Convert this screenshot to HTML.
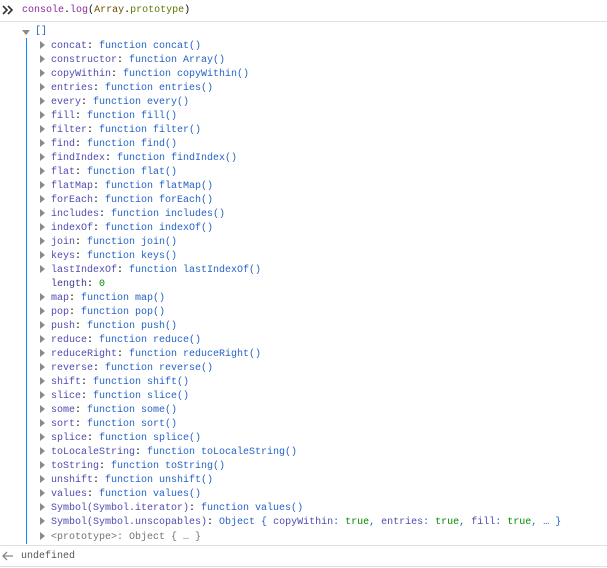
<!DOCTYPE html><html><head><style>
body{margin:0;width:607px;height:568px;background:#fff;font-family:"Liberation Mono",monospace;font-size:10px;color:#0c0c0d;overflow:hidden;position:relative}
.l{position:absolute;white-space:pre;line-height:14px}
.k{color:#4f4bb0}.f{color:#2563c4}.g{color:#058b00}.d{color:#3c3c8c}.p{color:#737373}
.t{position:absolute;width:0;height:0;border-top:4px solid transparent;border-bottom:4px solid transparent;border-left:5px solid #8a8a8a}
</style></head><body>
<svg style="position:absolute;left:2px;top:5px" width="12" height="10"><path d="M1 1l4 4-4 4M6 1l4 4-4 4" fill="none" stroke="#333" stroke-width="1.6"/></svg>
<div class="l" style="left:22px;top:4px"><span style="color:#8b2a9e">console</span>.<span style="color:#8b2a9e">log</span>(<span style="color:#6b4e00">Array</span>.<span style="color:#5a7a00">prototype</span>)</div>
<div style="position:absolute;left:0;right:0;top:21px;border-top:1px solid #e0e0e2"></div>
<div style="position:absolute;left:22px;top:30px;width:0;height:0;border-left:4px solid transparent;border-right:4px solid transparent;border-top:5px solid #8a8a8a"></div>
<div class="l f" style="left:35px;top:25px">[]</div>
<div style="position:absolute;left:26px;top:38px;width:1px;height:506px;background:#0a84ff"></div>
<div id="rows"></div>
<div style="position:absolute;left:0;right:0;top:545px;border-top:1px solid #e0e0e2"></div>
<svg style="position:absolute;left:2px;top:551px" width="12" height="10"><path d="M11 5H2M5 1L1 5l4 4" fill="none" stroke="#888" stroke-width="1.3"/></svg>
<div class="l" style="left:21px;top:550px;color:#555">undefined</div>
<div style="position:absolute;left:0;right:0;top:566px;border-top:1px solid #e0e0e2"></div>
<script>
var n=["concat","constructor:Array","copyWithin","entries","every","fill","filter","find","findIndex","flat","flatMap","forEach","includes","indexOf","join","keys","lastIndexOf","LEN","map","pop","push","reduce","reduceRight","reverse","shift","slice","some","sort","splice","toLocaleString","toString","unshift","values","SI","SU","PR"];
var h="";
n.forEach(function(s,i){var y=40+i*14+(i==35?1:0),c="";
if(s=="LEN"){h+='<div class="l" style="left:51px;top:'+y+'px"><span class="d">length</span>: <span class="g">0</span></div>';return;}
h+='<div class="t" style="left:40px;top:'+(y+1)+'px"></div>';
if(s=="SI")c='<span class="k">Symbol(Symbol.iterator)</span>: <span class="f">function values()</span>';
else if(s=="SU")c='<span class="k">Symbol(Symbol.unscopables)</span>: <span class="f">Object { <span class="k">copyWithin</span>: <span class="g">true</span>, <span class="k">entries</span>: <span class="g">true</span>, <span class="k">fill</span>: <span class="g">true</span>, … }</span>';
else if(s=="PR")c='<span class="p">&lt;prototype&gt;: Object { … }</span>';
else{var p=s.split(":");c='<span class="k">'+p[0]+'</span>: <span class="f">function '+(p[1]||p[0])+'()</span>';}
h+='<div class="l" style="left:51px;top:'+y+'px">'+c+'</div>';});
document.getElementById("rows").innerHTML=h;
</script>
</body></html>
